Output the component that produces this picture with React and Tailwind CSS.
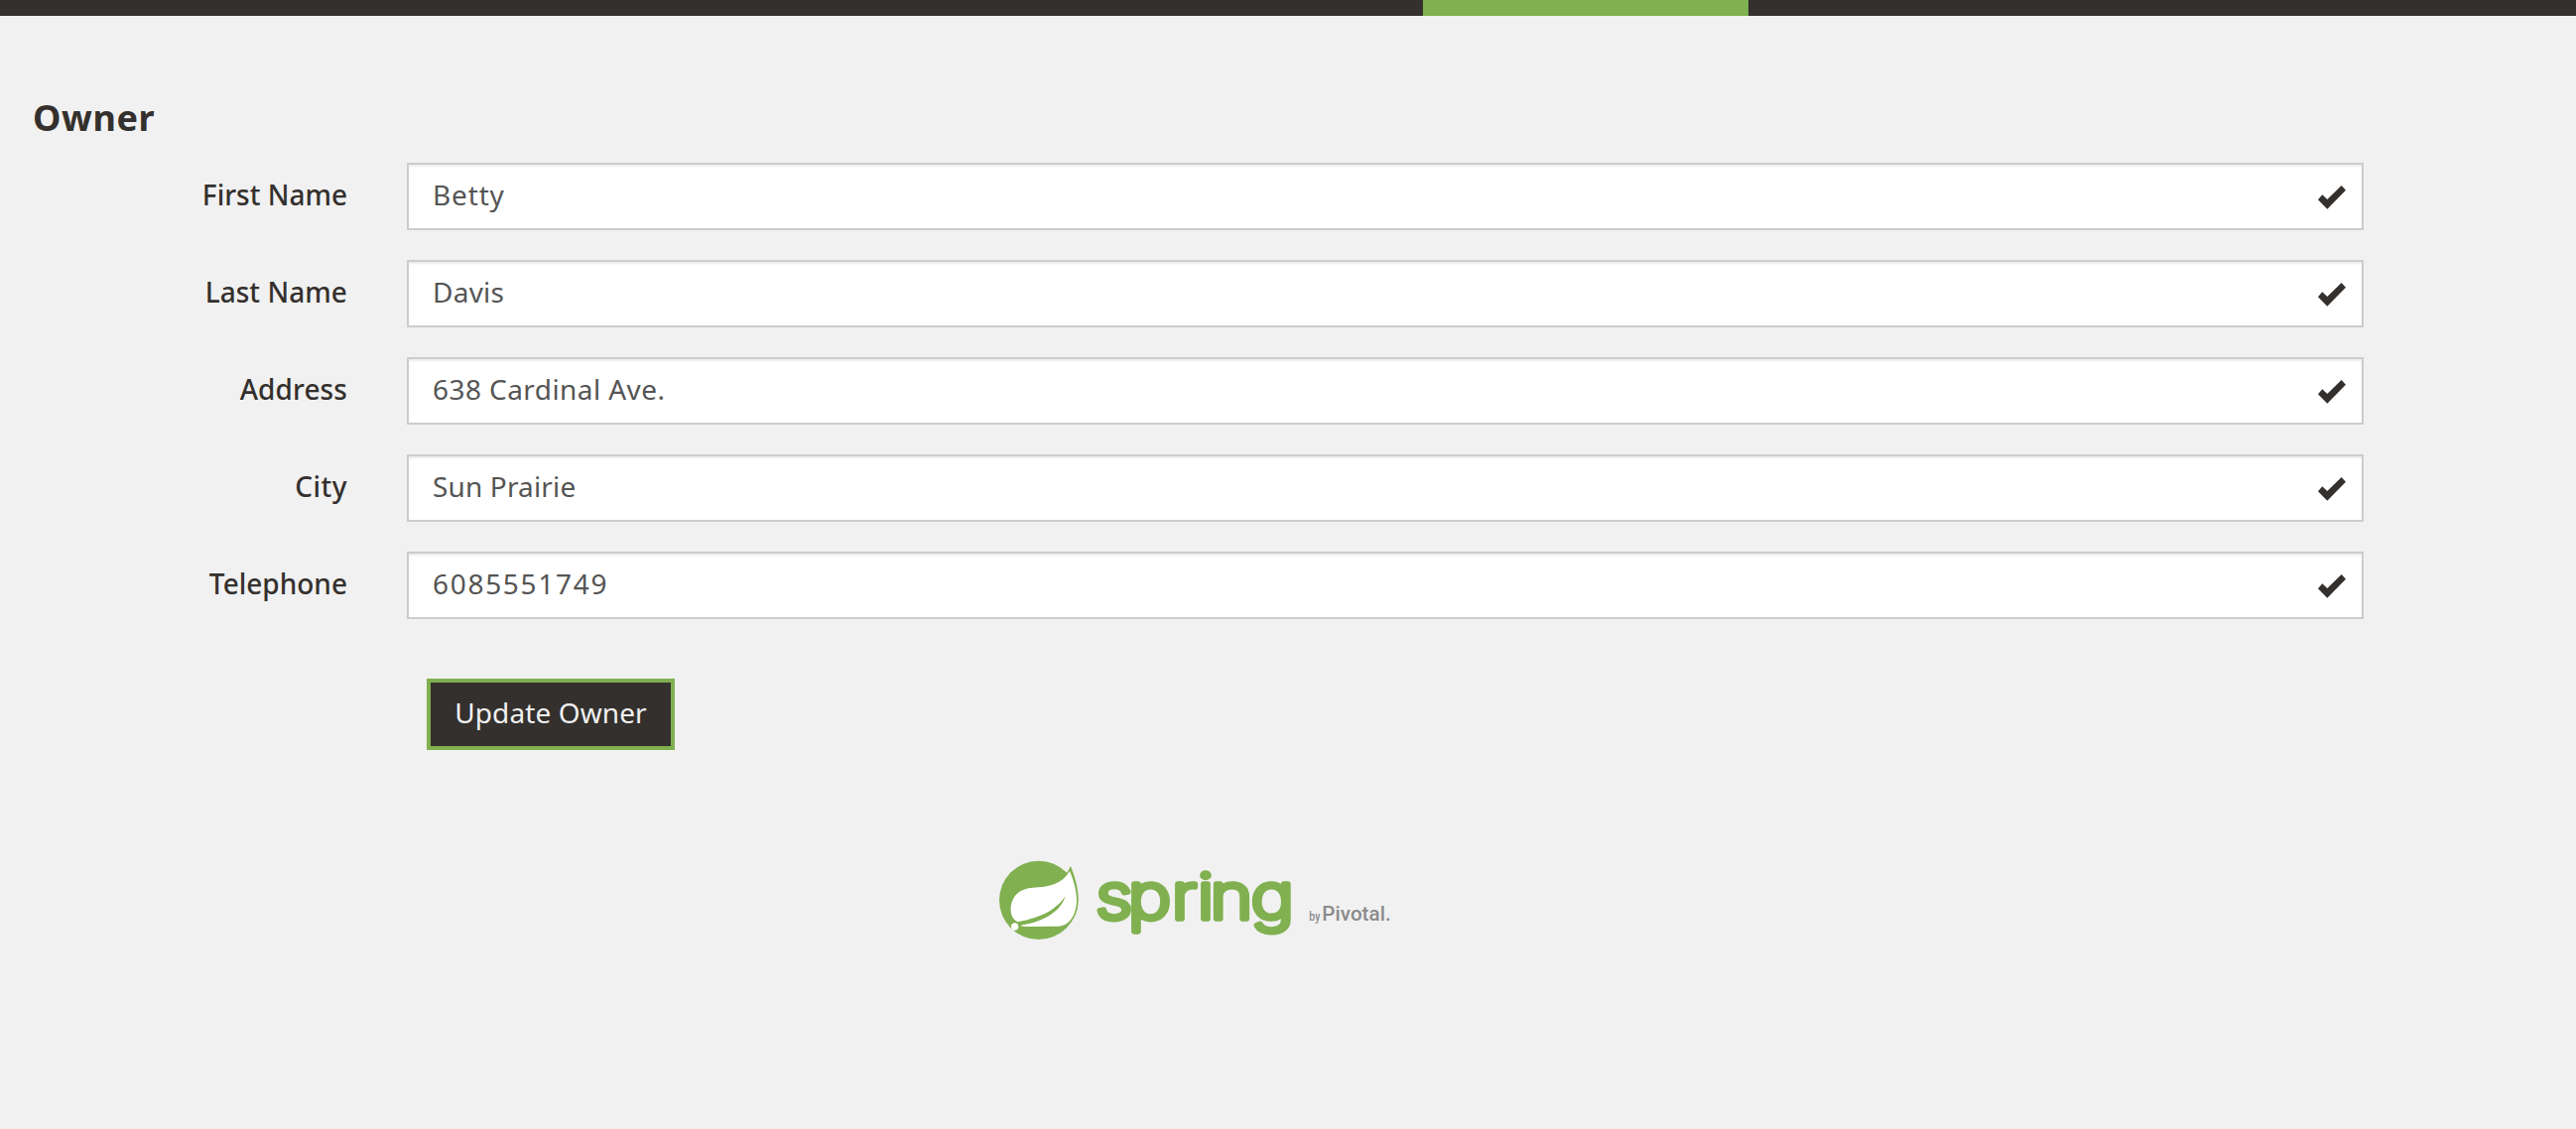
import React from "react";

const fields = [
  { label: "First Name", value: "Betty", labelTracking: "", tracking: "tracking-[0.85px]" },
  { label: "Last Name", value: "Davis", labelTracking: "tracking-[0.05px]", tracking: "tracking-[0.25px]" },
  { label: "Address", value: "638 Cardinal Ave.", labelTracking: "tracking-[0.1px]", tracking: "tracking-[0.43px]" },
  { label: "City", value: "Sun Prairie", labelTracking: "tracking-[0.5px]", tracking: "tracking-[0.15px]" },
  { label: "Telephone", value: "6085551749", labelTracking: "", tracking: "tracking-[1.7px]" },
];

function Check() {
  return (
    <svg className="mt-[21px] mr-4 h-6 w-7 shrink-0" viewBox="0 0 84 72" fill="#34302d">
      <path d="M0 43 L13 28 L28 42 L71 0 L84 14 L28 71 Z" />
    </svg>
  );
}

function Field({ label, value, labelTracking, tracking }) {
  return (
    <div className="flex h-[68px]">
      <label className={`w-[350px] pt-0.5 text-right font-medium leading-[60px] text-[#34302d] ${labelTracking}`}>
        {label}
      </label>
      <div className="ml-[60px] flex w-[1972px] justify-between border-2 border-[#ccc] bg-white pl-6 shadow-[inset_0_2px_2px_rgba(0,0,0,0.075)]">
        <span className={`leading-[60px] text-[#555] ${tracking}`}>{value}</span>
        <Check />
      </div>
    </div>
  );
}

function SpringLogo() {
  return (
    <svg className="h-[110px] w-[430px]" viewBox="0 0 1290 330">
      <circle cx="170" cy="172" r="119" fill="#80b050" />
      <path
        d="M267 69 C279 100 290 135 290 170 C290 215 268 248 238 258 L205 250 L250 100 Z"
        fill="#80b050"
      />
      <path
        d="M264 84 C274 108 285 140 285 172 C285 215 264 249 232 251 L130 252 C116 252 112 249 122 247 C184 237 236 208 251 160 C220 204 178 224 108 238 C92 233 84 213 86 193 C89 157 116 136 153 134 C203 133 242 122 264 84 Z"
        fill="#fff"
      />
      <circle cx="98" cy="252" r="11" fill="#fff" />
      <text
        x="298 382.6 497.4 565.2 599 706"
        y="227"
        transform="scale(1.15 1)"
        fill="#80b050"
        stroke="#80b050"
        strokeWidth="17"
        strokeLinejoin="round"
        fontFamily="Inter, sans-serif"
        fontWeight="200"
        fontSize="191"
      >
        spring
      </text>
      <g fill="#8a8a8c" fontFamily="Roboto, sans-serif">
        <text x="988" y="233" fontSize="38" fontWeight="500" textLength="33" lengthAdjust="spacingAndGlyphs">by</text>
        <text x="1027" y="234" fontSize="60" fontWeight="500" textLength="208" lengthAdjust="spacingAndGlyphs">Pivotal.</text>
      </g>
    </svg>
  );
}

export default function App() {
  return (
    <div className="h-[1138px] overflow-hidden bg-[#f1f1f1] font-['Noto_Sans',sans-serif] text-[28px]">
      <nav className="flex h-4 bg-[#34302d]">
        <div className="ml-[1434px] w-[328px] bg-[#80b050]" />
      </nav>
      <main>
        <h2 className="mt-[83px] pl-[33px] text-[36px] font-bold leading-10 tracking-[0.6px] text-[#34302d]">Owner</h2>
        <form className="mt-[25px] flex flex-col gap-[30px]">
          {fields.map((f) => (
            <Field key={f.label} {...f} />
          ))}
          <button
            type="button"
            className="mt-[30px] ml-[430px] h-[72px] w-[250px] border-4 border-[#80b050] bg-[#34302d] pb-1 text-center leading-[60px] tracking-[0.1px] text-[#f1f1f1]"
          >
            Update Owner
          </button>
        </form>
      </main>
      <footer className="mt-[94px] ml-[990px]">
        <SpringLogo />
      </footer>
    </div>
  );
}
